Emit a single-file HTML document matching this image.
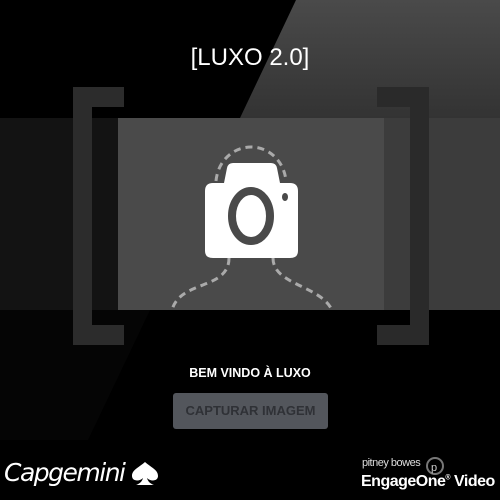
<!DOCTYPE html><html><head><style>
body{margin:0;width:500px;height:500px;overflow:hidden;background:#000;font-family:"Liberation Sans",sans-serif;position:relative}
div{position:absolute;white-space:nowrap}
</style></head><body>
<svg width="500" height="500" style="position:absolute;left:0;top:0">
<defs><linearGradient id="g" x1="0" y1="0" x2="0" y2="1"><stop offset="0" stop-color="#4a4a4a"/><stop offset="1" stop-color="#333"/></linearGradient></defs>
<polygon points="296,0 500,0 500,118 240,118" fill="url(#g)"/>
<polygon points="150,310 88,440 0,440 0,310" fill="#050505"/>
<rect x="0" y="118" width="500" height="192" fill="#131313"/>
<rect x="384" y="118" width="116" height="192" fill="#3c3c3c"/>
<rect x="118" y="118" width="266" height="192" fill="#4a4a4a"/>
<path d="M124,87H73V345H124V325H92V107H124Z" fill="#2c2c2c"/>
<path d="M377,87H429V345H377V325H410V107H377Z" fill="#2a2a2a"/>
<g fill="none" stroke="#aaa" stroke-width="3" stroke-dasharray="7,5">
<path d="M216,181C218,160 234,147 251,147C268,147 284,160 286,181"/>
<path d="M229,258C229,290 180,280 172,310"/>
<path d="M273,258C273,285 320,285 332,310"/>
</g>
<path d="M233,163H271Q276,163 277,168L280,183H290Q298,183 298,191V251Q298,258 290,258H213Q205,258 205,251V191Q205,183 213,183H224L227,168Q228,163 233,163Z" fill="#fff"/>
<ellipse cx="251" cy="216" rx="19" ry="25" fill="none" stroke="#4a4a4a" stroke-width="8"/>
<ellipse cx="285" cy="197" rx="3" ry="4" fill="#4a4a4a"/>
</svg>
<div style="left:0;width:500px;top:44px;text-align:center;color:#fff;font-size:24px">[LUXO 2.0]</div>
<div style="left:0;width:500px;top:366px;text-align:center;color:#fff;font-size:12.5px;font-weight:bold">BEM VINDO À LUXO</div>
<div style="left:173px;top:393px;width:155px;height:36px;background:#53565c;border-radius:3px;color:#2f3136;font-weight:bold;font-size:13px;line-height:36px;text-align:center">CAPTURAR IMAGEM</div>
<div style="left:4px;top:458px;color:#fff;font-size:25px;font-family:'DejaVu Sans',sans-serif;letter-spacing:-1.5px;font-style:italic">Capgemini</div>
<svg width="30" height="26" style="position:absolute;left:130px;top:460px"><path d="M15,2C8,8 2,10 2,16C2,21 9,22 13,18C12,22 9,24 6,25H24C21,24 18,22 17,18C21,22 28,21 28,16C28,10 22,8 15,2Z" fill="#fff"/></svg>
<div style="left:362px;top:457px;color:#ddd;font-size:11px;letter-spacing:-0.5px">pitney bowes</div>
<svg width="20" height="20" style="position:absolute;left:425px;top:456px"><circle cx="10" cy="10" r="8" fill="none" stroke="#777" stroke-width="2"/><text x="6" y="15" fill="#ccc" font-size="11" font-family="Liberation Sans">p</text></svg>
<div style="left:361px;top:473px;color:#fff;font-size:16px;font-weight:bold;letter-spacing:-0.5px">EngageOne<sup style="font-size:7px">®</sup> Video</div>
</body></html>
